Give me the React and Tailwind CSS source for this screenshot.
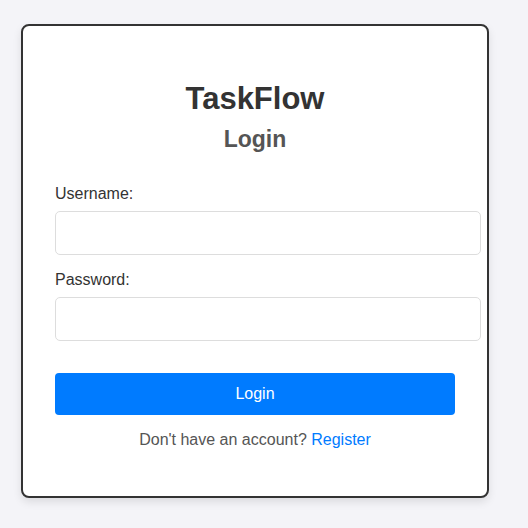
export default function App() {
  return (
    <div className="min-h-screen bg-[#f4f4f8] pt-[24px] pl-[21px] font-['Liberation_Sans',Arial,sans-serif]">
      <div className="w-[468px] rounded-[8px] border-2 border-[#333] bg-white px-[32px] pt-[56px] pb-[47px] shadow-[0_4px_8px_rgba(0,0,0,0.1)]">
        <h1 className="text-center text-[31px] font-bold leading-[34px] text-[#333]">
          TaskFlow
        </h1>
        <h2 className="mt-[10px] text-center text-[23px] font-bold leading-[26px] text-[#555]">
          Login
        </h2>

        <form onSubmit={(e) => e.preventDefault()}>
          <label className="mt-[33px] block text-[16px] leading-[18px] text-[#333]">
            Username:
          </label>
          <input
            type="text"
            className="mt-[8px] block h-[44px] w-[426px] rounded-[5px] border border-[#ddd] bg-white px-[12px] text-[16px] outline-none"
          />

          <label className="mt-[16px] block text-[16px] leading-[18px] text-[#333]">
            Password:
          </label>
          <input
            type="password"
            className="mt-[8px] block h-[44px] w-[426px] rounded-[5px] border border-[#ddd] bg-white px-[12px] text-[16px] outline-none"
          />

          <button
            type="submit"
            className="mt-[32px] block h-[42px] w-full rounded-[4px] bg-[#007bff] text-[16px] leading-[18px] text-white"
          >
            Login
          </button>
        </form>

        <p className="mt-[16px] text-center text-[16px] leading-[18px] text-[#555]">
          Don't have an account?{" "}
          <a href="#" className="text-[#007bff]">
            Register
          </a>
        </p>
      </div>
    </div>
  );
}
